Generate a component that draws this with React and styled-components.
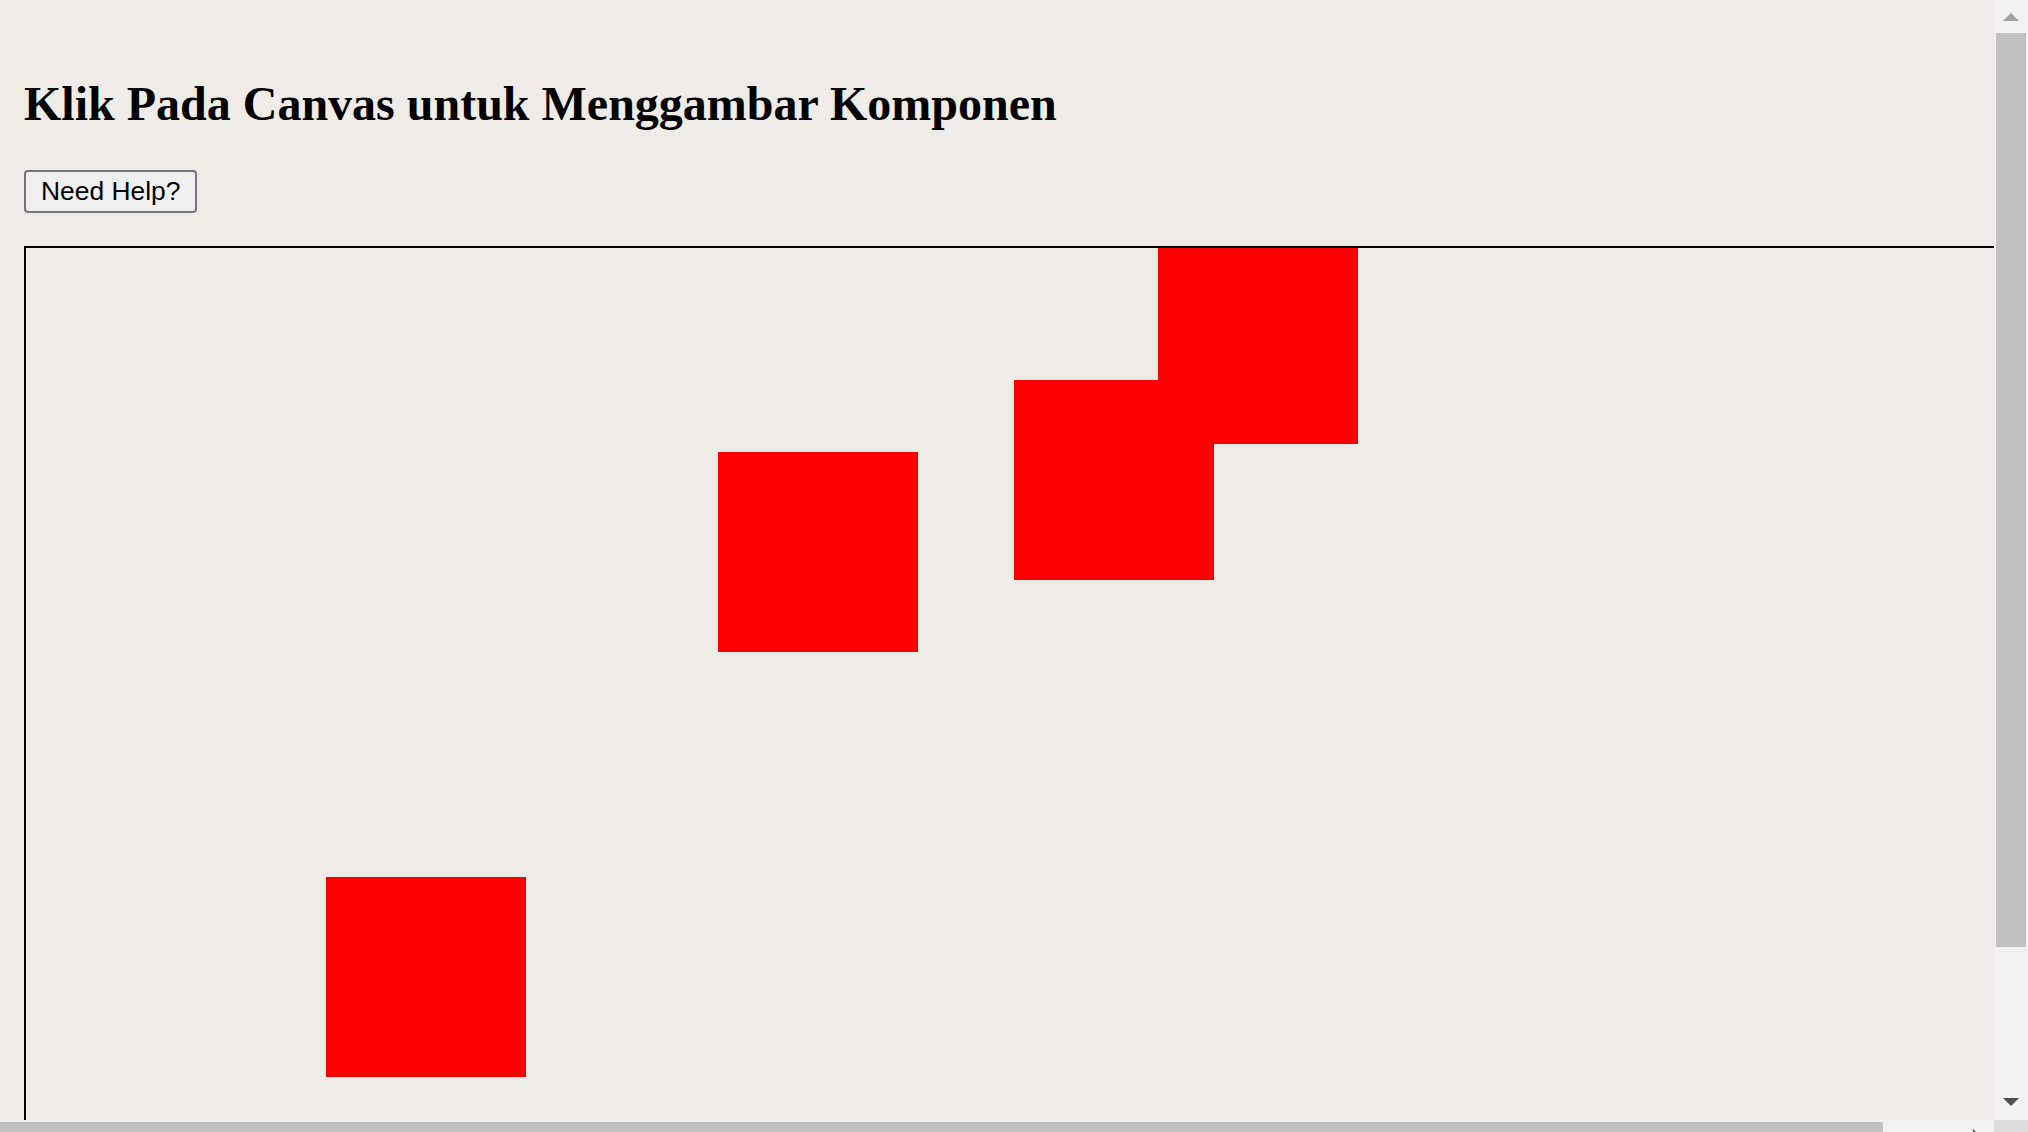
import React from 'react';
import styled, { createGlobalStyle, css } from 'styled-components';

const Global = createGlobalStyle`
  html, body {
    margin: 0;
    padding: 0;
    overflow: hidden;
    background: #efebe6;
  }
  #root {
    height: 1132px;
    overflow: hidden;
  }
`;

const Frame = styled.div`
  display: grid;
  grid-template-columns: 1994px 34px;
  grid-template-rows: 1120px 34px;
  width: 2028px;
  height: 1154px;
  background: #efebe6;
`;

const Content = styled.div`
  overflow: hidden;
`;

const VScroll = styled.div`
  display: flex;
  flex-direction: column;
  background: #f1f1f1;
`;

const HScroll = styled.div`
  display: flex;
  background: #f1f1f1;
`;

const Corner = styled.div`
  background: #dcdcdc;
`;

const ScrollButton = styled.div`
  flex: none;
  display: flex;
  box-sizing: border-box;
  align-items: flex-start;
  width: ${(p) => (p.$horizontal ? '34px' : '100%')};
  height: ${(p) => (p.$horizontal ? '100%' : '33px')};
  padding-top: ${(p) => p.$pad || 0}px;
  padding-left: ${(p) => p.$padLeft || 0}px;
  justify-content: ${(p) => (p.$horizontal ? 'flex-start' : 'center')};
`;

const Arrow = styled.span`
  display: block;
  width: 0;
  height: 0;
  ${(p) =>
    p.$dir === 'up' &&
    css`
      border-left: 8px solid transparent;
      border-right: 8px solid transparent;
      border-bottom: 8px solid ${p.$color};
    `}
  ${(p) =>
    p.$dir === 'down' &&
    css`
      border-left: 8px solid transparent;
      border-right: 8px solid transparent;
      border-top: 8px solid ${p.$color};
    `}
  ${(p) =>
    p.$dir === 'right' &&
    css`
      border-top: 8px solid transparent;
      border-bottom: 8px solid transparent;
      border-left: 8px solid ${p.$color};
    `}
`;

const Track = styled.div`
  flex: 1;
  display: flex;
  flex-direction: ${(p) => (p.$horizontal ? 'row' : 'column')};
`;

const Thumb = styled.div`
  flex: none;
  background: #c1c1c1;
  ${(p) =>
    p.$horizontal
      ? css`
          margin: 2px 0;
          height: 30px;
        `
      : css`
          margin: 0 2px;
        `}
`;

const Page = styled.main`
  box-sizing: border-box;
  width: 2075px;
  padding: 76px 24px 24px;
`;

const Title = styled.h1`
  margin: 0 0 39px;
  font-family: "Liberation Serif", "Times New Roman", serif;
  font-size: 48px;
  font-weight: bold;
  line-height: normal;
  color: #000;
  white-space: nowrap;
`;

const Toolbar = styled.div`
  display: flex;
  margin-bottom: 33px;
`;

const HelpButton = styled.button`
  font-family: "Liberation Sans", Arial, sans-serif;
  font-size: 26.4px;
  line-height: normal;
  color: #000;
  background: #efefef;
  border: 2px solid #767676;
  border-radius: 4px;
  padding: 4px 15px;
  cursor: pointer;
`;

const Canvas = styled.div`
  box-sizing: border-box;
  width: 100%;
  height: 1023px;
  border: 2px solid #000;
  overflow: hidden;
`;

const Drawing = styled.svg`
  display: block;
  width: 100%;
  height: 100%;
`;

const squares = [
  { x: 1132, y: -4 },
  { x: 988, y: 132 },
  { x: 692, y: 204 },
  { x: 300, y: 629 },
];

export default function App() {
  return (
    <>
      <Global />
      <Frame>
        <Content>
          <Page>
            <Title>Klik Pada Canvas untuk Menggambar Komponen</Title>
            <Toolbar>
              <HelpButton type="button">Need Help?</HelpButton>
            </Toolbar>
            <Canvas>
              <Drawing>
                {squares.map((s, i) => (
                  <rect key={i} x={s.x} y={s.y} width="200" height="200" fill="#ff0000" />
                ))}
              </Drawing>
            </Canvas>
          </Page>
        </Content>
        <VScroll>
          <ScrollButton $pad={13}>
            <Arrow $dir="up" $color="#a3a3a3" />
          </ScrollButton>
          <Track>
            <Thumb style={{ height: 914 }} />
          </Track>
          <ScrollButton $pad={11}>
            <Arrow $dir="down" $color="#505050" />
          </ScrollButton>
        </VScroll>
        <HScroll>
          <Track $horizontal>
            <Thumb $horizontal style={{ width: 1883 }} />
          </Track>
          <ScrollButton $horizontal $pad={9} $padLeft={13}>
            <Arrow $dir="right" $color="#505050" />
          </ScrollButton>
        </HScroll>
        <Corner />
      </Frame>
    </>
  );
}
